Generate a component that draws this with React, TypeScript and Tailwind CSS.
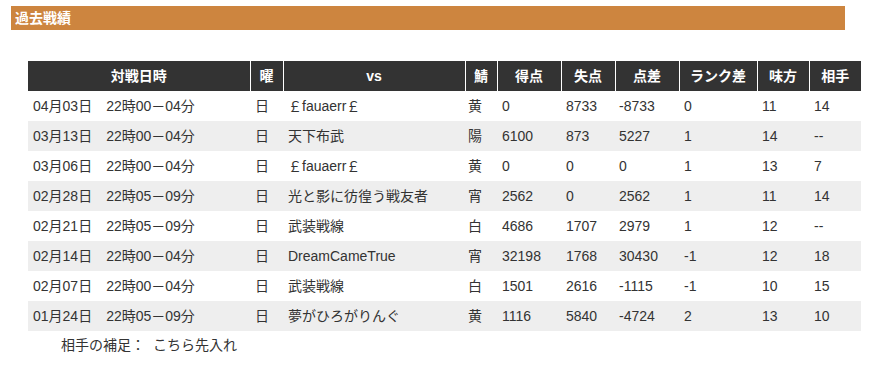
const rows = [
  { date: '04月03日', time: '22時00－04分', day: '日', vs: '￡fauaerr￡', srv: '黄', get: '0', lost: '8733', diff: '-8733', rank: '0', ally: '11', foe: '14' },
  { date: '03月13日', time: '22時00－04分', day: '日', vs: '天下布武', srv: '陽', get: '6100', lost: '873', diff: '5227', rank: '1', ally: '14', foe: '--' },
  { date: '03月06日', time: '22時00－04分', day: '日', vs: '￡fauaerr￡', srv: '黄', get: '0', lost: '0', diff: '0', rank: '1', ally: '13', foe: '7' },
  { date: '02月28日', time: '22時05－09分', day: '日', vs: '光と影に彷徨う戦友者', srv: '宵', get: '2562', lost: '0', diff: '2562', rank: '1', ally: '11', foe: '14' },
  { date: '02月21日', time: '22時05－09分', day: '日', vs: '武装戦線', srv: '白', get: '4686', lost: '1707', diff: '2979', rank: '1', ally: '12', foe: '--' },
  { date: '02月14日', time: '22時00－04分', day: '日', vs: 'DreamCameTrue', srv: '宵', get: '32198', lost: '1768', diff: '30430', rank: '-1', ally: '12', foe: '18' },
  { date: '02月07日', time: '22時00－04分', day: '日', vs: '武装戦線', srv: '白', get: '1501', lost: '2616', diff: '-1115', rank: '-1', ally: '10', foe: '15' },
  { date: '01月24日', time: '22時05－09分', day: '日', vs: '夢がひろがりんぐ', srv: '黄', get: '1116', lost: '5840', diff: '-4724', rank: '2', ally: '13', foe: '10' },
];

const heads = ['対戦日時', '曜', 'vs', '鯖', '得点', '失点', '点差', 'ランク差', '味方', '相手'];
const widths = [222, 33, 182, 32, 64, 54, 64, 78, 52, 52];

export default function App() {
  return (
    <div className="w-[869px] h-[367px] bg-white pt-[6px] text-[14px] text-[#333] font-['Liberation_Sans','Noto_Sans_CJK_JP',sans-serif]">
      <div className="ml-[11px] w-[834px] h-[24px] bg-[#cd853f] pl-[4px] flex items-center text-white font-bold leading-none">
        過去戦績
      </div>

      <table className="mt-[31px] ml-[28px] w-[833px] table-fixed border-collapse">
        <colgroup>
          {widths.map((w, i) => (
            <col key={i} style={{ width: w }} />
          ))}
        </colgroup>
        <thead>
          <tr className="bg-[#333333] text-white h-[30px]">
            {heads.map((h, i) => (
              <th key={h} className={`p-0 font-bold text-center align-middle leading-[30px] ${i > 0 ? 'border-l border-white' : ''}`}>
                {h}
              </th>
            ))}
          </tr>
        </thead>
        <tbody>
          {rows.map((r, i) => (
            <tr key={i} className={`h-[30px] ${i % 2 === 1 ? 'bg-[#eeeeee]' : 'bg-white'}`}>
              <td className="px-[5px] leading-[30px] whitespace-nowrap">{r.date}　{r.time}</td>
              <td className="px-[5px] leading-[30px]">{r.day}</td>
              <td className="px-[5px] leading-[30px] whitespace-nowrap">{r.vs}</td>
              <td className="px-[3px] leading-[30px]">{r.srv}</td>
              <td className="px-[5px] leading-[30px]">{r.get}</td>
              <td className="px-[5px] leading-[30px]">{r.lost}</td>
              <td className="px-[4px] leading-[30px]">{r.diff}</td>
              <td className="px-[5px] leading-[30px]">{r.rank}</td>
              <td className="px-[5px] leading-[30px]">{r.ally}</td>
              <td className="px-[5px] leading-[30px]">{r.foe}</td>
            </tr>
          ))}
        </tbody>
      </table>

      <p className="mt-[4px] ml-[61px] leading-[20px]">
        相手の補足：<span className="ml-[8px]">こちら先入れ</span>
      </p>
    </div>
  );
}
